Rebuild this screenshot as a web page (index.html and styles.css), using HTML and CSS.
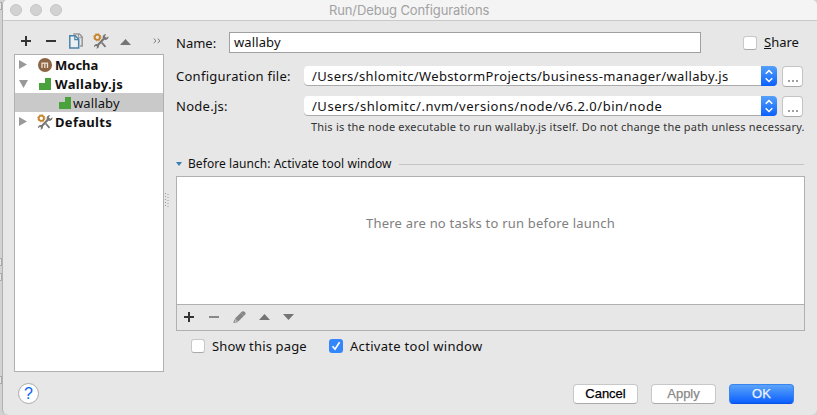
FILE: index.html
```html
<!DOCTYPE html>
<html lang="en">
<head>
<meta charset="utf-8">
<title>Run/Debug Configurations</title>
<link rel="stylesheet" href="styles.css">
</head>
<body>
<svg width="0" height="0" class="defs">
  <symbol id="tools" viewBox="0 0 16 16">
    <path d="M4.5 12.5 11 5.5" stroke="#777" stroke-width="2.2" fill="none"/>
    <path d="M15.4 3.3 13.3 4.8 11.8 3.4 13.2 1.2C10.6 1 9.1 3 9.9 5.2L11.5 6.8C14 7.3 15.9 5.8 15.4 3.3ZM1 14.2 3 12.8 4.3 14 3.2 15.6C5.5 15.8 6.5 13.8 5.8 12.2L4.5 11C2.2 10.5.7 12 1 14.2Z" fill="#777"/>
    <path d="M8.7 9.5 12.5 13.8" stroke="#777" stroke-width="1.8"/>
    <circle cx="4.3" cy="4.3" r="2.6" fill="none" stroke="#c8842c" stroke-width="1.8"/>
    <circle cx="4.3" cy="4.3" r="3.6" fill="none" stroke="#c8842c" stroke-width="1" stroke-dasharray="1.4 1.43"/>
  </symbol>
  <symbol id="wallaby" viewBox="0 0 12 12"><path d="M6 0H12V12H0V5H6Z" fill="#4aa23c"/></symbol>
  <symbol id="chevrons" viewBox="0 0 16 20"><path d="M4.7 7.8 8 4.6 11.3 7.8M4.7 12.3 8 15.5 11.3 12.3" fill="none" stroke="#fff" stroke-width="1.5"/></symbol>
</svg>
<div class="backdrop"><i class="b1"></i><i class="b2"></i><i class="b3"></i><i class="b4"></i></div>
<div class="window">
  <header class="titlebar">
    <span class="light"></span><span class="light"></span><span class="light"></span>
    <h1>Run/Debug Configurations</h1>
  </header>
  <main>
    <aside>
      <div class="toolbar">
        <svg class="t-add" width="12" height="12"><path d="M1 6H11M6 1V11" stroke="#333" stroke-width="2"/></svg>
        <svg class="t-rem" width="12" height="12"><path d="M1 6H11" stroke="#333" stroke-width="2"/></svg>
        <svg class="t-copy" width="14" height="16"><path d="M5 1.7V1H10.5L13.2 4V13H11" fill="none" stroke="#999" stroke-width="1.6"/><path d="M9.5 1V4.7H13" fill="none" stroke="#999"/><path d="M.8 2.8H6.2L9.7 6.3V15H.8Z" fill="#e9eff3" stroke="#4a83a8" stroke-width="1.5"/><path d="M5.8 3V6.7H9.5" fill="none" stroke="#4a83a8" stroke-width="1.2"/></svg>
        <svg class="t-tools" width="16" height="16"><use href="#tools"/></svg>
        <svg class="t-up" width="11" height="6"><path d="M0 6 5.5 0 11 6Z" fill="#747474"/></svg>
        <svg class="t-more" width="8" height="6"><path d="M.7.5 3 2.8.7 5M4.7.5 7 2.8 4.7 5" fill="none" stroke="#777"/></svg>
      </div>
      <ul class="tree">
        <li><svg class="arrow" width="9" height="9"><path d="M0 0 8 4.5 0 9Z" fill="#999"/></svg><svg class="ico" width="16" height="16"><circle cx="8" cy="8" r="7" fill="#8c6544"/><path d="M5 11V6.2H10.5V11M7.8 6.2V11" fill="none" stroke="#eee2d5" stroke-width="1.3"/></svg><b class="mocha">Mocha</b></li>
        <li><svg class="arrow" width="9" height="9"><path d="M0 1H9L4.5 9Z" fill="#999"/></svg><svg class="ico wl" width="12" height="12"><use href="#wallaby"/></svg><b class="walljs">Wallaby.js</b></li>
        <li class="selected"><svg class="ico" width="12" height="12"><use href="#wallaby"/></svg><span class="wall">wallaby</span></li>
        <li><svg class="arrow" width="9" height="9"><path d="M0 0 8 4.5 0 9Z" fill="#999"/></svg><svg class="ico" width="16" height="16"><use href="#tools"/></svg><b class="defaults">Defaults</b></li>
      </ul>
    </aside>
    <div class="splitter"><svg width="5" height="15"><path d="M1.5 0V15M4 1V15" stroke="#999" stroke-dasharray="1 2"/></svg></div>
    <section class="form">
      <div class="row name-row"><label class="l-name">Name:</label><div class="input"><span class="wall">wallaby</span></div><span class="check"></span><span class="share"><u>S</u>hare</span></div>
      <div class="row combo-row"><label class="l-conf">Configuration file:</label><div class="combo"><span class="p-conf">/Users/shlomitc/WebstormProjects/business-manager/wallaby.js</span><svg width="16" height="20"><use href="#chevrons"/></svg></div><div class="browse"><i></i><i></i><i></i></div></div>
      <div class="row combo-row node"><label class="l-conf">Node.js:</label><div class="combo"><span class="p-node">/Users/shlomitc/.nvm/versions/node/v6.2.0/bin/node</span><svg width="16" height="20"><use href="#chevrons"/></svg></div><div class="browse"><i></i><i></i><i></i></div></div>
      <p class="hint"><span>This is the node executable to run wallaby.js itself. Do not change the path unless necessary.</span></p>
      <div class="divider"><svg width="6" height="4"><path d="M0 0H6L3 4Z" fill="#3580b0"/></svg><span class="before">Before launch: Activate tool window</span><i></i></div>
      <div class="tasks">
        <div class="empty"><span>There are no tasks to run before launch</span></div>
        <div class="task-tools">
          <svg width="12" height="12"><path d="M1 6H11M6 1V11" stroke="#333" stroke-width="2"/></svg>
          <svg width="12" height="12"><path d="M1 6H11" stroke="#888" stroke-width="2"/></svg>
          <svg width="13" height="12"><path d="M2 7.5 9 .5Q10.5-.3 11.8 1T12.2 3.5L5.3 10.5Z" fill="#858585"/><path d="M2 8.5 4.5 10.7.8 11.5Z" fill="none" stroke="#888"/><path d="M7.8 2 10.7 4.6" stroke="#aaa" stroke-width=".8"/></svg>
          <svg width="11" height="6"><path d="M0 6 5.5 0 11 6Z" fill="#747474"/></svg>
          <svg width="11" height="6"><path d="M0 0H11L5.5 6Z" fill="#747474"/></svg>
        </div>
      </div>
      <div class="options"><span class="check"></span><span class="show">Show this page</span><span class="check on"><svg width="14" height="14"><path d="M3.5 7.3 6 10.2 10.6 3.3" fill="none" stroke="#fff" stroke-width="1.7"/></svg></span><span class="activate">Activate tool window</span></div>
    </section>
  </main>
  <footer><span class="help">?</span><button>Cancel</button><button class="disabled">Apply</button><button class="primary">OK</button></footer>
</div>
</body>
</html>
```
FILE: styles.css
```css
* { box-sizing: border-box; }
body { margin: 0; height: 415px; display: flex; overflow: hidden; background: #d2d2d2; font: 13px/16px "Noto Sans", sans-serif; color: #111; }
svg { display: block; flex: none; }
.defs { position: absolute; }
span, b, label, h1 { white-space: nowrap; }
.backdrop { width: 2px; flex: none; display: flex; flex-direction: column; }
.backdrop i { width: 2px; height: 8px; border: 1px solid #aaa; border-left: 0; background: #e5e5e5; }
.b1 { margin-top: 2px; }
.b2 { margin-top: 248px; }
.b3 { margin-top: 7px; }
.b4 { margin-top: 95px; }
.window { flex: 1; height: 415px; display: flex; flex-direction: column; border-left: 1px solid #b2b2b2; border-radius: 5px 5px 6px 6px; background: #e7e7e7; overflow: hidden; }
.titlebar { height: 21px; flex: none; display: flex; align-items: center; padding-left: 7px; gap: 8px; background: #f4f4f4; border-bottom: 1px solid #c9c9c9; }
.light { width: 12px; height: 12px; border-radius: 50%; background: #d2d2d2; border: 1px solid #c5c5c5; }
h1 { margin: 0 0 0 259px; font: 13px/16px Inter, sans-serif; letter-spacing: -.12px; color: #a2a2a2; }
main { height: 351px; flex: none; display: flex; padding-left: 11px; }
aside { width: 150px; flex: none; }
.toolbar { height: 33px; display: flex; align-items: center; padding: 7px 0 0 6px; }
.t-rem { margin-left: 13px; }
.t-copy { margin-left: 12px; }
.t-tools { margin-left: 10px; }
.t-up { margin: 1px 0 0 11px; }
.t-more { margin-left: 22px; }
.tree { height: 318px; margin: 0; padding: 0; list-style: none; border: 1px solid #b0b0b0; background: #fff; }
.tree li { height: 19px; display: flex; align-items: center; padding-left: 4px; }
.arrow { margin-right: 9px; }
.ico { margin-right: 2px; }
.wl { margin: 0 4px 0 2px; }
.walljs { letter-spacing: .37px; }
.defaults { letter-spacing: .3px; }
.wall { letter-spacing: .12px; }
.tree .selected { background: #c9c9c9; padding-left: 44px; }
.selected .ico { margin-right: 2px; }
.splitter { width: 12px; flex: none; padding-top: 172px; }
.form { width: 628px; flex: none; padding-top: 11px; }
.row { display: flex; align-items: center; }
.row label { width: 53px; }
.name-row { height: 21px; }
.input { width: 472px; height: 21px; border: 1px solid #a0a0a0; background: #fff; padding: 1px 4px; }
.check { width: 14px; height: 14px; flex: none; border: 1px solid #c8c8c8; border-bottom-color: #aaa; border-radius: 3px; background: #fff; }
.name-row .check { margin: 0 7px 0 42px; }
.share { margin-top: -2px; }
.combo-row { height: 20px; margin-top: 13px; }
.node { margin-top: 10px; }
.combo-row label { width: 128px; }
.l-conf { letter-spacing: .27px; }
.p-conf { letter-spacing: .37px; }
.p-node { letter-spacing: .52px; }
.combo { width: 473px; height: 20px; display: flex; align-items: center; justify-content: space-between; padding-left: 8px; border-radius: 4px; background: #fff; box-shadow: inset 0 -1px #aaa; overflow: hidden; }
.combo svg { background: linear-gradient(#55a0fa, #0a60ff); }
.browse { width: 21px; height: 21px; margin-left: 5px; display: flex; justify-content: center; align-items: flex-end; gap: 2px; padding-bottom: 4px; border: 1px solid #c4c4c4; border-bottom-color: #aaa; border-radius: 4px; background: #fff; }
.browse i { width: 2px; height: 2px; background: #a0a0a0; }
.hint { height: 16px; margin: 3px 0 0 135px; font-size: 11px; letter-spacing: .2px; color: #333; }
.divider { height: 16px; display: flex; align-items: center; margin-top: 21px; font-size: 12px; letter-spacing: .06px; }
.divider span { margin: 0 7px 0 6px; }
.divider i { flex: 1; height: 1px; background: #c4c4c4; }
.tasks { width: 629px; height: 155px; margin-top: 4px; border: 1px solid #b0b0b0; background: #fff; }
.empty { height: 127px; padding-top: 38px; text-align: center; letter-spacing: .21px; color: #808080; }
.task-tools { height: 26px; display: flex; align-items: center; gap: 13px; padding: 0 0 2px 6px; border-top: 1px solid #b0b0b0; background: #e7e7e7; }
.options { display: flex; align-items: center; height: 16px; margin-top: 7px; padding-left: 15px; }
.options > span:nth-child(even) { margin-left: 7px; width: 117px; }
.show { letter-spacing: .15px; }
.activate { letter-spacing: .3px; }
.options .check.on { border: 0; background: #3487fa; }
footer { height: 43px; display: flex; align-items: center; padding-left: 15px; gap: 13px; font: 13px/20px "Liberation Sans", sans-serif; }
.help { width: 21px; height: 21px; margin-right: 521px; border: 1px solid #aaa; border-radius: 50%; background: #fff; color: #0865f5; text-align: center; font: 16px/19px "Liberation Sans", sans-serif; }
footer button { width: 65px; height: 20px; padding: 0; border: 1px solid #c8c8c8; border-bottom-color: #aaa; border-radius: 4px; background: #fff; font: 13px/18px "Liberation Sans", sans-serif; color: #000; -webkit-text-stroke: .25px currentColor; }
footer .disabled { color: #888; }
footer .primary { border-color: #3884f0; border-bottom-color: #0852e0; background: linear-gradient(#5ba3f8, #0a60ff); color: #edf3ff; }
```
